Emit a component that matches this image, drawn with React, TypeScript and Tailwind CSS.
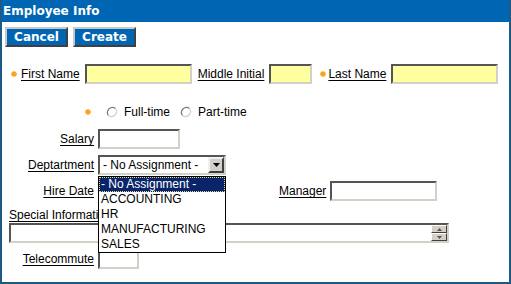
import React from 'react';

const inset = 'border-2 border-t-[#555] border-l-[#555] border-b-[#d4d0c8] border-r-[#d4d0c8]';
const outset = 'border-2 border-t-[#c8c8c8] border-l-[#c8c8c8] border-b-[#404040] border-r-[#404040]';

const Star = () => (
  <svg width="6" height="6" viewBox="0 0 6 6" className="shrink-0">
    <path d="M3 0v6M0 3h6M0.9 0.9l4.2 4.2M5.1 0.9L0.9 5.1" stroke="#f5a31a" strokeWidth="1.3" />
  </svg>
);

const Radio = () => (
  <svg width="12" height="12" viewBox="0 0 12 12" className="shrink-0">
    <circle cx="6" cy="6" r="5" fill="#fff" />
    <path d="M2.5 9.5A5 5 0 0 1 9.5 2.5" stroke="#7a7a7a" strokeWidth="1.2" fill="none" />
    <path d="M9.5 2.5A5 5 0 0 1 2.5 9.5" stroke="#d4d0c8" strokeWidth="1.2" fill="none" />
  </svg>
);

const Label = ({ children }: { children: React.ReactNode }) => (
  <span className="underline underline-offset-[2px] whitespace-nowrap">{children}</span>
);

const departments = ['- No Assignment -', 'ACCOUNTING', 'HR', 'MANUFACTURING', 'SALES'];

export default function App() {
  return (
    <div className="w-[511px] h-[284px] bg-white border-2 border-t-0 border-[#1f5a85] font-['Liberation_Sans',Arial,sans-serif] text-[12px] text-black overflow-hidden">
      <div className="h-[22px] bg-[#0066b3] flex items-center pl-[1px] text-white font-bold font-['DejaVu_Sans',Verdana,sans-serif] text-[12px]">
        Employee Info
      </div>

      <div className="mt-[5px] ml-[3px] flex gap-[5px]">
        <button className={`w-[63px] h-[20px] ${outset} bg-[#0066b3] text-white font-bold font-['DejaVu_Sans',Verdana,sans-serif] text-[12px] leading-none`}>Cancel</button>
        <button className={`w-[63px] h-[20px] ${outset} bg-[#0066b3] text-white font-bold font-['DejaVu_Sans',Verdana,sans-serif] text-[12px] leading-none`}>Create</button>
      </div>

      <div className="mt-[17px] h-[20px] flex items-center pl-[9px]">
        <Star />
        <span className="ml-[4px]"><Label>First Name</Label></span>
        <div className={`ml-[5px] w-[107px] h-[20px] bg-[#ffffa0] ${inset}`} />
        <span className="ml-[6px]"><Label>Middle Initial</Label></span>
        <div className={`ml-[5px] w-[43px] h-[20px] bg-[#ffffa0] ${inset}`} />
        <span className="ml-[8px]"><Star /></span>
        <span className="ml-[2px]"><Label>Last Name</Label></span>
        <div className={`ml-[5px] w-[107px] h-[20px] bg-[#ffffa0] ${inset}`} />
      </div>

      <div className="mt-[21px] h-[14px] flex items-center pl-[83px]">
        <Star />
        <span className="ml-[15px]"><Radio /></span>
        <span className="ml-[6px]">Full-time</span>
        <span className="ml-[10px]"><Radio /></span>
        <span className="ml-[6px]">Part-time</span>
      </div>

      <div className="mt-[10px] h-[20px] flex items-center">
        <div className="w-[92px] text-right"><Label>Salary</Label></div>
        <div className={`ml-[4px] w-[82px] h-[20px] bg-white ${inset}`} />
      </div>

      <div className="mt-[6px] h-[20px] flex items-center relative z-10">
        <div className="w-[92px] text-right"><Label>Deptartment</Label></div>
        <div className="ml-[4px] relative">
          <div className={`w-[128px] h-[20px] bg-white ${inset} flex items-center justify-between`}>
            <span className="pl-[3px] whitespace-nowrap">- No Assignment -</span>
            <div className={`w-[16px] h-[16px] bg-[#d4d0c8] border-2 border-t-[#f0f0f0] border-l-[#f0f0f0] border-b-[#404040] border-r-[#404040] flex items-center justify-center`}>
              <svg width="7" height="4" viewBox="0 0 7 4"><path d="M0 0h7L3.5 4z" fill="#000" /></svg>
            </div>
          </div>
          <div className="absolute top-[21px] left-0 w-[128px] border border-black bg-white">
            {departments.map((d, i) => (
              <div
                key={d}
                className={i === 0
                  ? 'h-[15px] leading-[13px] pl-[1px] bg-[#0a246a] text-white border border-dotted border-[#e8d88a] whitespace-nowrap'
                  : 'h-[15px] leading-[15px] pl-[2px] whitespace-nowrap'}
              >
                {d}
              </div>
            ))}
          </div>
        </div>
      </div>

      <div className="mt-[6px] h-[20px] flex items-center">
        <div className="w-[92px] text-right"><Label>Hire Date</Label></div>
        <div className={`ml-[4px] w-[107px] h-[20px] bg-white ${inset}`} />
        <span className="ml-[74px]"><Label>Manager</Label></span>
        <div className={`ml-[4px] w-[107px] h-[20px] bg-white ${inset}`} />
      </div>

      <div className="mt-[7px] h-[14px] leading-[14px] pl-[7px]">
        <Label>Special Information</Label>
      </div>
      <div className={`mt-[1px] ml-[7px] w-[440px] h-[20px] bg-white ${inset} flex justify-end`}>
        <div className="w-[16px] flex flex-col">
          <div className="h-[8px] bg-[#d4d0c8] border border-t-white border-l-white border-b-[#404040] border-r-[#404040] flex items-center justify-center">
            <svg width="5" height="3" viewBox="0 0 5 3"><path d="M2.5 0L5 3H0z" fill="#555" /></svg>
          </div>
          <div className="h-[8px] bg-[#d4d0c8] border border-t-white border-l-white border-b-[#404040] border-r-[#404040] flex items-center justify-center">
            <svg width="5" height="3" viewBox="0 0 5 3"><path d="M0 0h5L2.5 3z" fill="#555" /></svg>
          </div>
        </div>
      </div>

      <div className="mt-[6px] h-[20px] flex items-center">
        <div className="w-[92px] text-right"><Label>Telecommute</Label></div>
        <div className={`ml-[4px] w-[41px] h-[20px] bg-white ${inset}`} />
      </div>
    </div>
  );
}
